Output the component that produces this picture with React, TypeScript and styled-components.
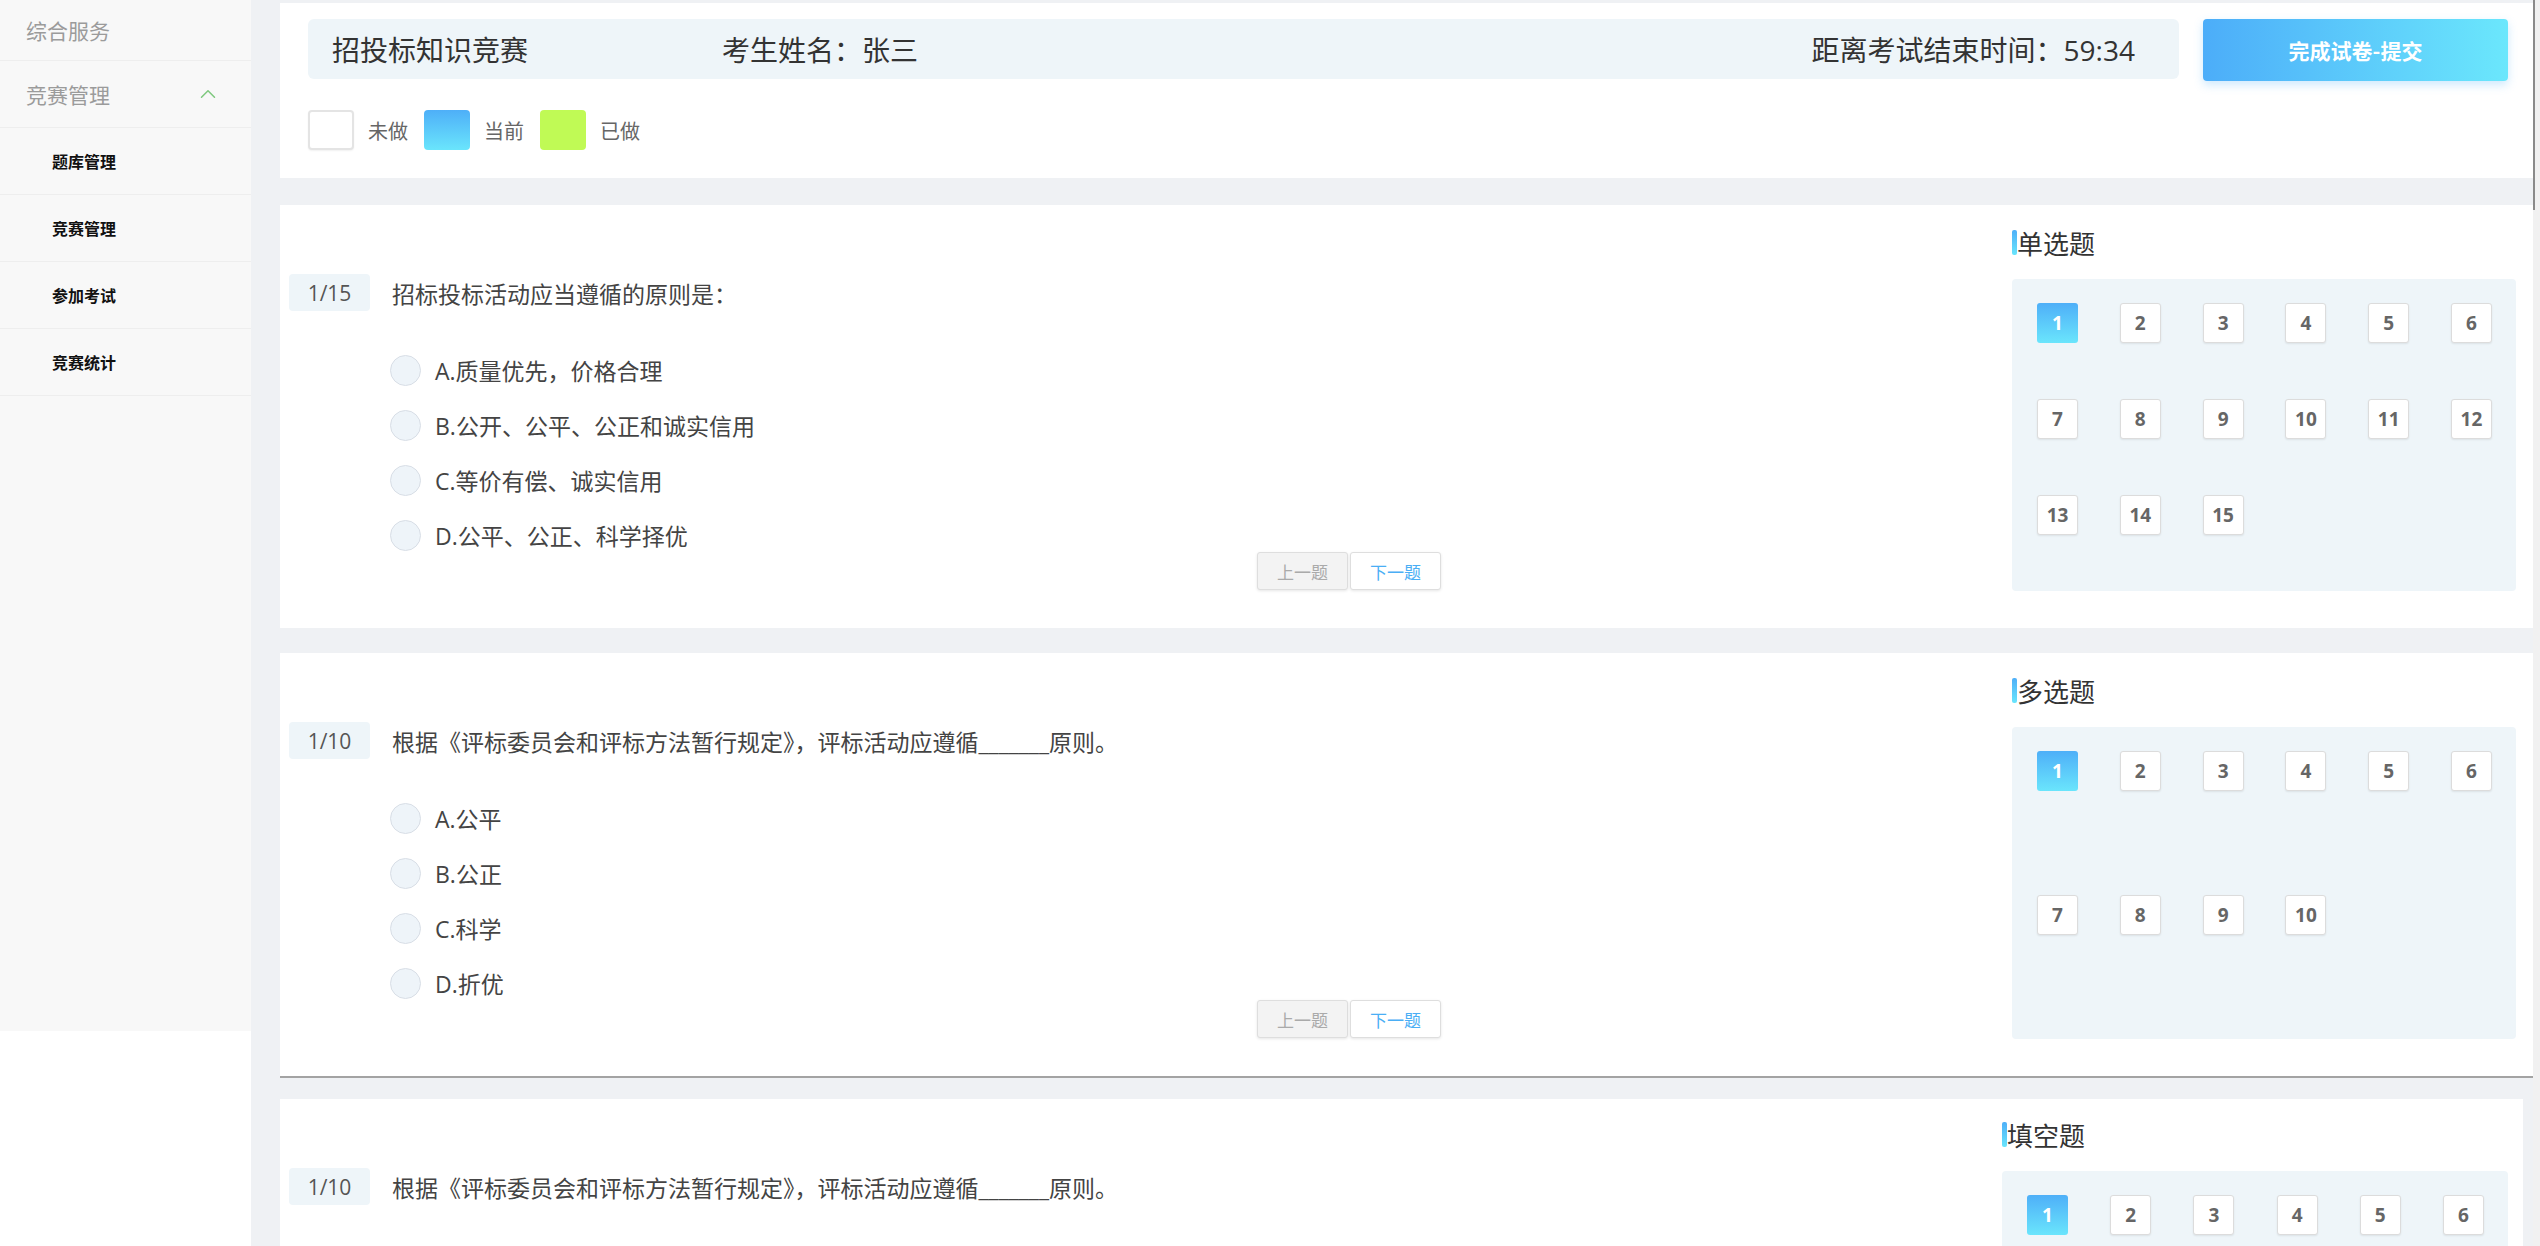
import React from "react";
import styled, { createGlobalStyle, css } from "styled-components";
import { ChevronUp } from "lucide-react";

const GlobalStyle = createGlobalStyle`
  html, body {
    margin: 0;
    padding: 0;
    background: #fff;
    overflow: hidden;
  }
  body {
    font-family: "Open Sans", "Noto Sans CJK SC", sans-serif;
    color: #333;
  }
  * {
    box-sizing: border-box;
  }
`;

type Question = {
  index: string;
  text: string;
  options: string[];
};

type Section = {
  title: string;
  total: number;
  rows: number;
};

const cards: { question: Question; section: Section; narrow?: boolean; divider?: boolean }[] = [
  {
    question: {
      index: "1/15",
      text: "招标投标活动应当遵循的原则是：",
      options: ["A.质量优先，价格合理", "B.公开、公平、公正和诚实信用", "C.等价有偿、诚实信用", "D.公平、公正、科学择优"],
    },
    section: { title: "单选题", total: 15, rows: 3 },
  },
  {
    question: {
      index: "1/10",
      text: "根据《评标委员会和评标方法暂行规定》，评标活动应遵循_______原则。",
      options: ["A.公平", "B.公正", "C.科学", "D.折优"],
    },
    section: { title: "多选题", total: 10, rows: 2 },
    divider: true,
  },
  {
    question: {
      index: "1/10",
      text: "根据《评标委员会和评标方法暂行规定》，评标活动应遵循_______原则。",
      options: ["A.公平", "B.公正", "C.科学", "D.折优"],
    },
    section: { title: "填空题", total: 10, rows: 2 },
    narrow: true,
  },
];

const sideMenu = ["题库管理", "竞赛管理", "参加考试", "竞赛统计"];

const App = () => {
  return (
    <>
      <GlobalStyle />
      <Shell>
        <Sidebar>
          <NavTop $first>综合服务</NavTop>
          <NavTop>
            竞赛管理
            <ChevronUp size={26} strokeWidth={1.4} color="#7fc97f" />
          </NavTop>
          {sideMenu.map((item) => (
            <NavSub key={item}>{item}</NavSub>
          ))}
        </Sidebar>

        <Main>
          <Header>
            <TopRow>
              <InfoBar>
                <ExamTitle>招投标知识竞赛</ExamTitle>
                <span>考生姓名：张三</span>
                <Timer>距离考试结束时间：59:34</Timer>
              </InfoBar>
              <SubmitButton>完成试卷-提交</SubmitButton>
            </TopRow>
            <Legend>
              <Swatch $kind="empty" />
              <LegendLabel>未做</LegendLabel>
              <Swatch $kind="current" />
              <LegendLabel>当前</LegendLabel>
              <Swatch $kind="done" />
              <LegendLabel>已做</LegendLabel>
            </Legend>
          </Header>

          {cards.map((card, i) => (
            <Card key={i} $narrow={card.narrow} $divider={card.divider}>
              <QuestionCol>
                <QuestionRow>
                  <IndexBadge>{card.question.index}</IndexBadge>
                  <QuestionText>{card.question.text}</QuestionText>
                </QuestionRow>
                <OptionList>
                  {card.question.options.map((opt) => (
                    <Option key={opt}>
                      <Radio />
                      <OptionLabel>{opt}</OptionLabel>
                    </Option>
                  ))}
                </OptionList>
                <Pager>
                  <PageButton $disabled>上一题</PageButton>
                  <PageButton>下一题</PageButton>
                </Pager>
              </QuestionCol>

              <NavCol $narrow={card.narrow}>
                <SectionTitle>{card.section.title}</SectionTitle>
                <NumberGrid $rows={card.section.rows}>
                  {Array.from({ length: card.section.total }, (_, n) => (
                    <NumberBox key={n} $active={n === 0}>
                      {n + 1}
                    </NumberBox>
                  ))}
                </NumberGrid>
              </NavCol>
            </Card>
          ))}
        </Main>

        <ScrollTrack>
          <ScrollThumb />
        </ScrollTrack>
      </Shell>
    </>
  );
};

export default App;

const blueGradient = "linear-gradient(180deg, #4eaff8 0%, #6ae5fc 100%)";

const Shell = styled.div`
  display: flex;
  height: 100vh;
  overflow: hidden;
  background: #fff;
`;

const Sidebar = styled.aside`
  width: 251px;
  flex-shrink: 0;
  height: 1031px;
  background: #f8f8f8;
  display: flex;
  flex-direction: column;
`;

const NavTop = styled.div<{ $first?: boolean }>`
  height: ${(p) => (p.$first ? "61px" : "67px")};
  padding: 0 30px 0 26px;
  display: flex;
  align-items: center;
  justify-content: space-between;
  border-bottom: 1px solid #eeeeee;
  font-size: 21px;
  color: #9b9b9b;
  font-family: "Noto Sans CJK SC", sans-serif;
`;

const NavSub = styled.div`
  height: 67px;
  padding-left: 52px;
  display: flex;
  align-items: center;
  border-bottom: 1px solid #eeeeee;
  font-size: 16px;
  font-weight: 700;
  color: #111;
  font-family: "Noto Sans CJK SC", sans-serif;
`;

const Main = styled.main`
  flex: 1;
  min-width: 0;
  background: #eff1f4;
  padding: 3px 0 0 29px;
  display: flex;
  flex-direction: column;
  gap: 25px;
`;

const Header = styled.header`
  background: #fff;
  height: 175px;
  flex-shrink: 0;
  padding: 16px 25px 0 28px;
  margin-bottom: 2px;
`;

const TopRow = styled.div`
  display: flex;
  align-items: flex-start;
  gap: 24px;
`;

const InfoBar = styled.div`
  flex: 1;
  height: 60px;
  background: #eef5f9;
  border-radius: 6px;
  display: flex;
  align-items: center;
  padding: 0 44px 0 24px;
  font-size: 28px;
  color: #333;
`;

const ExamTitle = styled.span`
  min-width: 390px;
`;

const Timer = styled.span`
  margin-left: auto;
`;

const SubmitButton = styled.button`
  width: 305px;
  height: 62px;
  border: none;
  border-radius: 4px;
  background: linear-gradient(90deg, #4cadf9 0%, #6be7fc 100%);
  box-shadow: 0 4px 10px rgba(78, 176, 248, 0.28);
  color: #fff;
  font-family: "Noto Sans CJK SC", sans-serif;
  font-size: 21px;
  font-weight: 700;
  cursor: pointer;
`;

const Legend = styled.div`
  margin-top: 29px;
  display: flex;
  align-items: center;
`;

const Swatch = styled.span<{ $kind: "empty" | "current" | "done" }>`
  width: 46px;
  height: 40px;
  border-radius: 4px;
  ${(p) =>
    p.$kind === "empty" &&
    css`
      background: #fff;
      border: 2px solid #e4e4e4;
      box-shadow: 0 1px 2px rgba(0, 0, 0, 0.06);
    `}
  ${(p) => p.$kind === "current" && css`background: ${blueGradient};`}
  ${(p) => p.$kind === "done" && css`background: #c0fa55;`}
`;

const LegendLabel = styled.span`
  margin: 0 16px 0 14px;
  font-size: 20px;
  color: #666;
  font-family: "Noto Sans CJK SC", sans-serif;
`;

const Card = styled.section<{ $narrow?: boolean; $divider?: boolean }>`
  display: flex;
  flex-shrink: 0;
  background: #fff;
  margin-right: ${(p) => (p.$narrow ? "10px" : "0")};
  border-bottom: ${(p) => (p.$divider ? "2px solid #a3a3a3" : "none")};
  margin-bottom: ${(p) => (p.$divider ? "-4px" : "0")};
`;

const QuestionCol = styled.div`
  flex: 1;
  padding: 69px 0 38px 9px;
  display: flex;
  flex-direction: column;
`;

const QuestionRow = styled.div`
  display: flex;
  align-items: center;
`;

const IndexBadge = styled.span`
  width: 81px;
  height: 37px;
  border-radius: 4px;
  background: #eef5f9;
  display: flex;
  align-items: center;
  justify-content: center;
  font-size: 21px;
  color: #555;
`;

const QuestionText = styled.span`
  margin-left: 22px;
  font-size: 23px;
  color: #444;
`;

const OptionList = styled.div`
  margin-top: 44px;
  padding-left: 101px;
  display: flex;
  flex-direction: column;
  gap: 25px;
`;

const Option = styled.label`
  display: flex;
  align-items: center;
  height: 30px;
`;

const Radio = styled.span`
  width: 31px;
  height: 31px;
  border-radius: 50%;
  background: #eef4f9;
  border: 1px solid #d8dee6;
`;

const OptionLabel = styled.span`
  margin-left: 14px;
  font-size: 23px;
  color: #444;
`;

const Pager = styled.div`
  margin-top: 2px;
  padding-left: 968px;
  display: flex;
  gap: 2px;
`;

const PageButton = styled.button<{ $disabled?: boolean }>`
  width: 91px;
  height: 38px;
  border: 1px solid #dedede;
  border-radius: 3px;
  box-shadow: 0 1px 3px rgba(0, 0, 0, 0.1);
  background: ${(p) => (p.$disabled ? "#f3f3f3" : "#fff")};
  color: ${(p) => (p.$disabled ? "#aaa" : "#4aaef5")};
  font-family: "Noto Sans CJK SC", sans-serif;
  font-size: 17px;
  cursor: pointer;
`;

const NavCol = styled.div<{ $narrow?: boolean }>`
  width: 553px;
  flex-shrink: 0;
  padding: ${(p) => (p.$narrow ? "23px 15px 37px 32px" : "25px 17px 37px 32px")};
  display: flex;
  flex-direction: column;
`;

const SectionTitle = styled.h3`
  margin: 0 0 24px;
  display: flex;
  align-items: center;
  height: 25px;
  font-size: 26px;
  font-weight: 400;
  line-height: 25px;
  color: #333;
  font-family: "Noto Sans CJK SC", sans-serif;

  &::before {
    content: "";
    width: 5px;
    height: 25px;
    border-radius: 2px;
    background: ${blueGradient};
  }
`;

const NumberGrid = styled.div<{ $rows: number }>`
  height: 312px;
  padding: 24px 24px 0 25px;
  border-radius: 4px;
  background: #eef5f9;
  display: grid;
  grid-template-columns: repeat(6, 41px);
  grid-template-rows: repeat(${(p) => p.$rows}, 1fr);
  justify-content: space-between;
  align-items: start;
`;

const NumberBox = styled.span<{ $active?: boolean }>`
  width: 41px;
  height: 40px;
  border-radius: 3px;
  display: flex;
  align-items: center;
  justify-content: center;
  font-family: "Open Sans", sans-serif;
  font-size: 19px;
  font-weight: 700;
  ${(p) =>
    p.$active
      ? css`
          background: ${blueGradient};
          color: #fff;
        `
      : css`
          background: #fff;
          color: #666;
          border: 1px solid #dcdcdc;
          box-shadow: 0 1px 2px rgba(0, 0, 0, 0.08);
        `}
`;

const ScrollTrack = styled.div`
  width: 7px;
  flex-shrink: 0;
  background: #f1f1f1;
`;

const ScrollThumb = styled.div`
  width: 2px;
  height: 210px;
  background: #8a8a8a;
`;
